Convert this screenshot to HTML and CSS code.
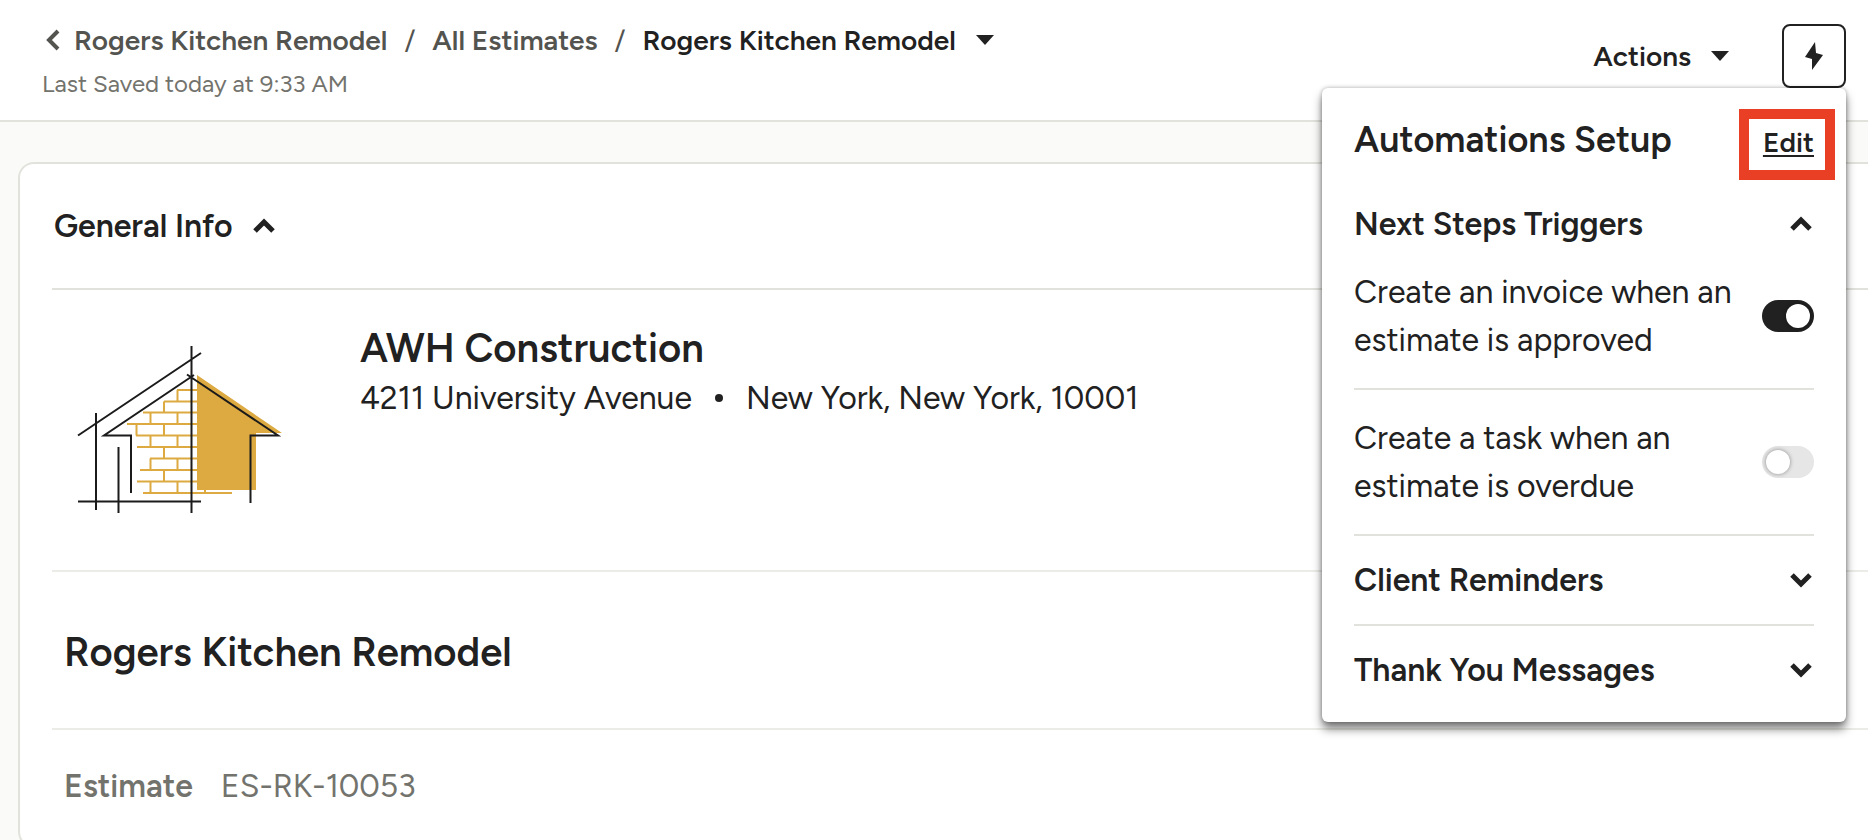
FILE: index.html
```html
<!DOCTYPE html>
<html lang="en">

<head>
    <meta charset="UTF-8">
    <meta name="viewport" content="width=device-width, initial-scale=1.0">
    <title>Rogers Kitchen Remodel - Estimate</title>
    <link rel="stylesheet" href="styles.css">
</head>

<body>
    <!-- Header -->
    <header class="topbar">
        <div class="topbar-left">
            <nav class="breadcrumb" aria-label="Breadcrumb">
                <a href="#" class="crumb">
                    <svg class="back-icon" width="14" height="22" viewBox="0 0 14 22"><path d="M12 2L3 11l9 9" /></svg>
                    Rogers Kitchen Remodel
                </a>
                <span class="slash">/</span>
                <a href="#" class="crumb">All Estimates</a>
                <span class="slash">/</span>
                <button type="button" class="crumb-current">
                    Rogers Kitchen Remodel
                    <svg class="caret" width="18" height="10" viewBox="0 0 18 10"><path d="M0 0h18L9 10z" /></svg>
                </button>
            </nav>
            <p class="saved">Last Saved today at 9:33 AM</p>
        </div>

        <div class="topbar-right">
            <button type="button" class="actions">
                Actions
                <svg class="caret" width="18" height="10" viewBox="0 0 18 10"><path d="M0 0h18L9 10z" /></svg>
            </button>
            <div class="automations">
                <button type="button" class="bolt-btn" aria-label="Automations">
                    <svg width="18" height="28" viewBox="0 0 18 28"><path d="M10 0L0 15l7 2v11l11-15-7-2z" /></svg>
                </button>

                <!-- Automations menu -->
                <section class="popover">
                    <div class="popover-head">
                        <h2>Automations Setup</h2>
                        <a href="#" class="edit">Edit</a>
                    </div>
                    <button type="button" class="group-title">
                        Next Steps Triggers
                        <svg class="chevron" width="24" height="16" viewBox="0 0 24 16"><path d="M2 13l9-9 9 9" /></svg>
                    </button>
                    <label class="trigger">
                        <span>Create an invoice when an estimate is approved</span>
                        <input type="checkbox" class="toggle" checked>
                    </label>
                    <label class="trigger">
                        <span>Create a task when an estimate is overdue</span>
                        <input type="checkbox" class="toggle">
                    </label>
                    <button type="button" class="group-title collapsed">
                        Client Reminders
                        <svg class="chevron" width="24" height="16" viewBox="0 0 24 16"><path d="M2 3l9 9 9-9" /></svg>
                    </button>
                    <button type="button" class="group-title collapsed">
                        Thank You Messages
                        <svg class="chevron" width="24" height="16" viewBox="0 0 24 16"><path d="M2 3l9 9 9-9" /></svg>
                    </button>
                </section>
            </div>
        </div>
    </header>

    <!-- Estimate -->
    <main class="content">
        <div class="card">
            <button type="button" class="section-title">
                General Info
                <svg class="chevron" width="24" height="16" viewBox="0 0 24 16"><path d="M2 13l9-9 9 9" /></svg>
            </button>

            <div class="company">
                <svg class="logo" width="208" height="170" viewBox="16 13 208 170" role="img" aria-label="AWH Construction logo">
                    <path class="logo-fill" d="M137 44l85 58h-26v57h-59z" />
                    <path class="logo-brick" d="M117 59h20M104 70.500h33M83 81.500h54M67 93h70M76 104.500h61M77 116h60M90 127.500h47M80 139h57M77 150.500h60M83 162h89M117.500 59v11.500M104 70.500v11M90.500 81.500V93M117.500 81.500V93M76.500 93v11.500M104 93v11.500M90.500 104.500V116M117.500 104.500V116M104 116v11.500M90.500 127.500V139M117.500 127.500V139M104 139v11.500M90.500 150.500V162M117.500 150.500V162M145 157v5" />
                    <path class="logo-line" d="M131.500 15v167M18 104.500L141 22M36 82v97M58.500 116v66M18 170.500h123M134 44L44 104.500h27V162M127 43.500l91 61h-27.500V172" />
                </svg>
                <div class="company-info">
                    <h2>AWH Construction</h2>
                    <p class="address">
                        <span>4211 University Avenue</span>
                        <span class="dot"></span>
                        <span>New York, New York, 10001</span>
                    </p>
                </div>
            </div>

            <h1 class="estimate-name">Rogers Kitchen Remodel</h1>

            <p class="estimate-number">
                <strong>Estimate</strong>
                <span>ES-RK-10053</span>
            </p>
        </div>
    </main>
</body>

</html>
```

FILE: styles.css
```css
/* Reset */
* {
    margin: 0;
    padding: 0;
    box-sizing: border-box;
}

body {
    height: 100vh;
    overflow: hidden;
    background-color: #fafaf8;
    color: #212121;
    font-family: Figtree, Lato, sans-serif;
    font-size: 32px;
    line-height: 48px;
}

button {
    background: none;
    border: none;
    color: inherit;
    font: inherit;
    cursor: pointer;
}

a {
    color: inherit;
    text-decoration: none;
}

svg {
    flex-shrink: 0;
}

.caret {
    fill: #212121;
}

.chevron {
    fill: none;
    stroke: #212121;
    stroke-width: 5;
}

/* Header */
.topbar {
    display: flex;
    justify-content: space-between;
    height: 122px;
    padding: 24px 22px 0 42px;
    background-color: #fff;
    border-bottom: 2px solid #e2e2dd;
}

.breadcrumb {
    display: flex;
    align-items: center;
    gap: 17px;
    font-size: 28px;
    line-height: 32px;
    font-weight: 600;
    color: #53534f;
}

.crumb,
.crumb-current {
    display: flex;
    align-items: center;
    gap: 14px;
}

.crumb-current {
    gap: 20px;
    color: #212121;
}

.slash {
    font-weight: 400;
}

.back-icon {
    margin-left: 4px;
    fill: none;
    stroke: #53534f;
    stroke-width: 4;
}

.saved {
    margin-top: 12px;
    font-size: 24px;
    line-height: 32px;
    color: #73736d;
}

.topbar-right {
    display: flex;
    align-items: flex-start;
    gap: 53px;
}

.actions {
    display: flex;
    align-items: center;
    gap: 20px;
    height: 64px;
    font-size: 28px;
    font-weight: 600;
}

.automations {
    position: relative;
}

.bolt-btn {
    display: flex;
    align-items: center;
    justify-content: center;
    width: 64px;
    height: 64px;
    border: 2px solid #212121;
    border-radius: 8px;
}

.bolt-btn svg {
    fill: #212121;
}

/* Automations menu */
.popover {
    position: absolute;
    top: 64px;
    right: 0;
    z-index: 10;
    width: 524px;
    padding: 21px 32px 8px;
    background-color: #fff;
    border-radius: 6px;
    box-shadow: 0 7px 10px rgba(0, 0, 0, 0.5), 0 0 4px rgba(0, 0, 0, 0.3);
}

.popover-head {
    display: flex;
    justify-content: space-between;
    align-items: flex-start;
    height: 71px;
    margin-right: -21px;
    margin-bottom: 20px;
}

.popover h2 {
    padding-top: 7px;
    font-size: 36px;
    font-weight: 600;
}

.edit {
    padding: 6px 11px 10px 14px;
    border: 10px solid #e83f25;
    font-size: 28px;
    line-height: 35px;
    font-weight: 600;
    text-decoration: underline;
    text-decoration-thickness: 2px;
    text-underline-offset: 3px;
}

.group-title {
    display: flex;
    justify-content: space-between;
    align-items: center;
    width: 100%;
    font-weight: 600;
}

.group-title.collapsed {
    height: 88px;
}

.group-title.collapsed + .group-title.collapsed {
    height: 90px;
    border-top: 2px solid #e2e2dd;
}

.trigger {
    display: flex;
    justify-content: space-between;
    align-items: center;
    gap: 24px;
    padding: 20px 0 24px;
    border-bottom: 2px solid #e2e2dd;
}

.trigger + .trigger {
    padding-top: 24px;
}

.toggle {
    appearance: none;
    flex-shrink: 0;
    display: flex;
    align-items: center;
    width: 52px;
    height: 32px;
    padding: 0 4px;
    background-color: #e6e6e6;
    border-radius: 16px;
    cursor: pointer;
}

.toggle::before {
    content: "";
    width: 24px;
    height: 24px;
    border-radius: 50%;
    background-color: #fff;
    box-shadow: 0 0 4px rgba(0, 0, 0, 0.4);
}

.toggle:checked {
    justify-content: flex-end;
    background-color: #212121;
}

/* Estimate card */
.content {
    padding: 40px 0 0 18px;
}

.card {
    height: 686px;
    padding-left: 32px;
    background-color: #fff;
    border: 2px solid #e2e2dd;
    border-right: none;
    border-radius: 16px 0 0 16px;
}

.section-title {
    display: flex;
    align-items: center;
    gap: 20px;
    width: 100%;
    height: 124px;
    padding-left: 2px;
    font-weight: 600;
}

.company {
    display: flex;
    gap: 76px;
    height: 284px;
    padding: 32px 0 0 24px;
    border-top: 2px solid #e2e2dd;
    border-bottom: 2px solid #ebebe7;
}

.logo {
    margin-top: 22px;
}

.logo-fill {
    fill: #dda941;
}

.logo-brick,
.logo-line {
    fill: none;
    stroke: #dda941;
    stroke-width: 2;
}

.logo-line {
    stroke: #1b1b1b;
}

.company h2,
.estimate-name {
    font-size: 40px;
    line-height: 52px;
    font-weight: 600;
}

.address {
    display: flex;
    align-items: center;
    gap: 23px;
}

.dot {
    width: 8px;
    height: 8px;
    border-radius: 50%;
    background-color: #212121;
}

.estimate-name {
    padding: 54px 12px 50px;
    border-bottom: 2px solid #ebebe7;
}

.estimate-number {
    display: flex;
    gap: 28px;
    padding: 32px 12px;
    color: #73736d;
}

.estimate-number strong {
    font-weight: 600;
}
```
